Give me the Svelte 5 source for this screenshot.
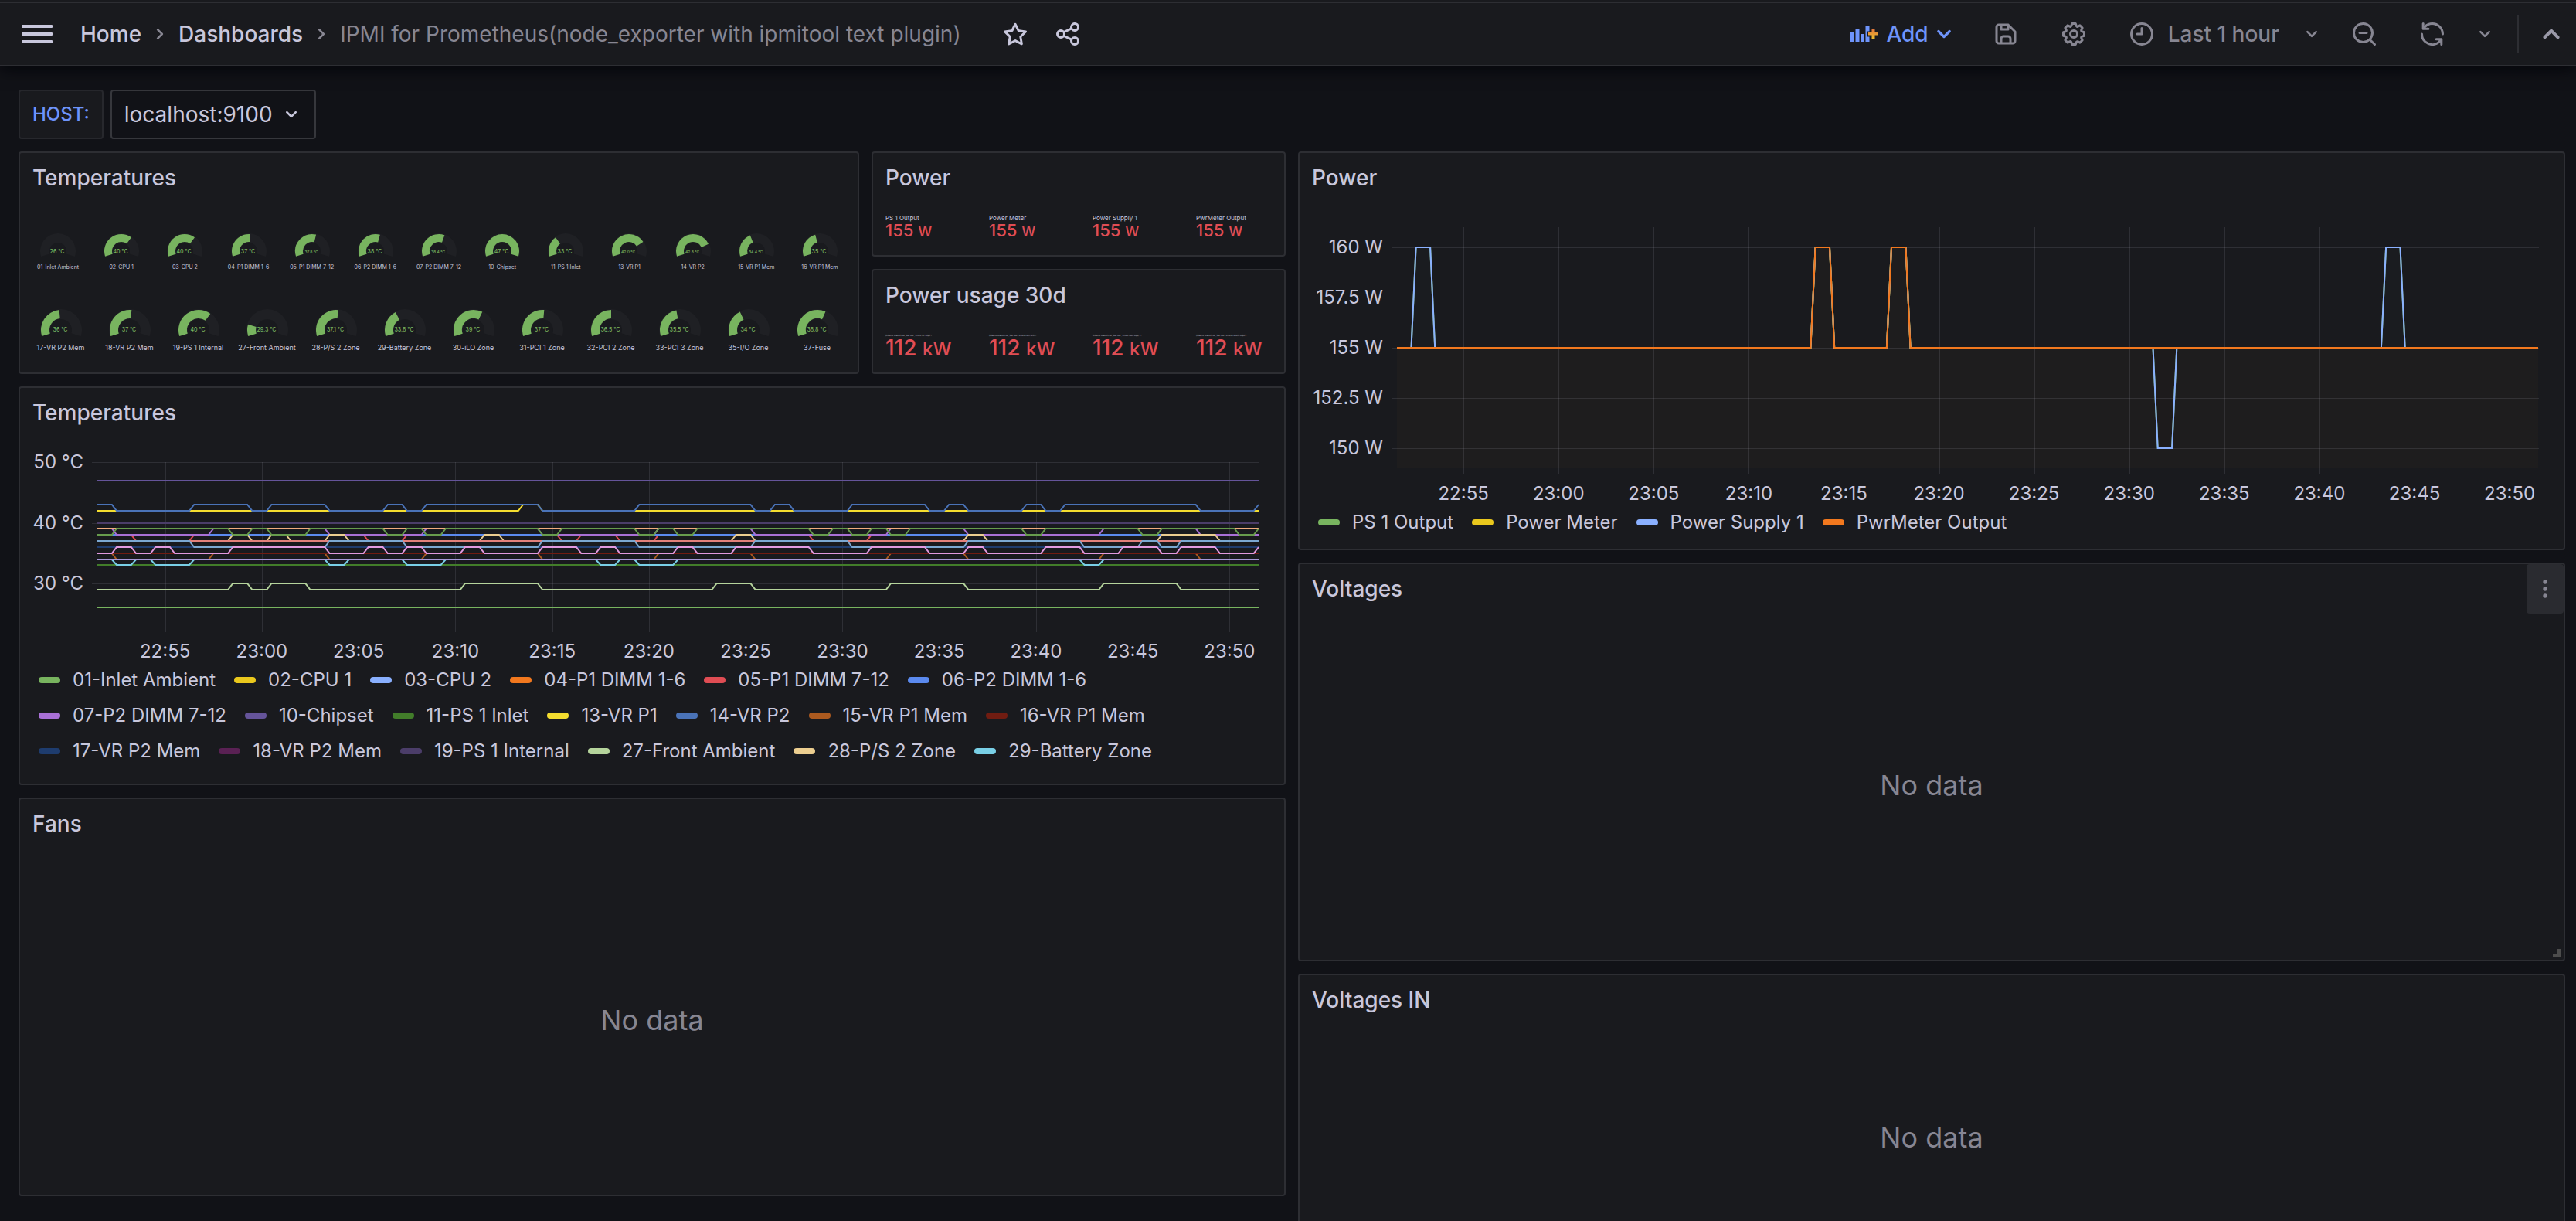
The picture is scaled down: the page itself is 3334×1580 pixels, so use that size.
<script lang="ts">
  interface Series {
    name: string;
    color: string;
    points: [number, number][];
  }
  interface Chart {
    width: number;
    height: number;
    left: number;
    top: number;
    bottom: number;
    min: number;
    max: number;
    ticks: number[];
    unit: string;
    fill: boolean;
  }

  const SPAN = 60; // minutes shown
  const times = ["22:55", "23:00", "23:05", "23:10", "23:15", "23:20", "23:25", "23:30", "23:35", "23:40", "23:45", "23:50"];

  const icons = {
    down: "M17,9.17a1,1,0,0,0-1.41,0L12,12.71,8.46,9.17a1,1,0,0,0-1.41,0,1,1,0,0,0,0,1.42l4.24,4.24a1,1,0,0,0,1.42,0L17,10.59A1,1,0,0,0,17,9.17Z",
    up: "M17,13.41,12.71,9.17a1,1,0,0,0-1.42,0L7.05,13.41a1,1,0,0,0,0,1.42,1,1,0,0,0,1.41,0L12,11.29l3.54,3.54a1,1,0,0,0,.7.29,1,1,0,0,0,.71-.29A1,1,0,0,0,17,13.41Z",
    right: "M14.83,11.29,10.59,7.05a1,1,0,0,0-1.42,0,1,1,0,0,0,0,1.41L12.71,12,9.17,15.54a1,1,0,0,0,0,1.41,1,1,0,0,0,.71.29,1,1,0,0,0,.71-.29l4.24-4.24A1,1,0,0,0,14.83,11.29Z",
    star: "M22,9.67A1,1,0,0,0,21.14,9l-5.69-.83L12.9,3a1,1,0,0,0-1.8,0L8.55,8.16,2.86,9a1,1,0,0,0-.81.68,1,1,0,0,0,.25,1l4.13,4-1,5.68A1,1,0,0,0,6.9,21.44L12,18.77l5.1,2.67a.93.93,0,0,0,.46.12,1,1,0,0,0,.59-.19,1,1,0,0,0,.4-1l-1-5.68,4.13-4A1,1,0,0,0,22,9.67Zm-6.15,4a1,1,0,0,0-.29.88l.72,4.2-3.76-2a1.06,1.06,0,0,0-.94,0l-3.76,2,.72-4.2a1,1,0,0,0-.29-.88l-3-3,4.21-.61a1,1,0,0,0,.76-.55L12,5.7l1.88,3.82a1,1,0,0,0,.76.55l4.21.61Z",
    share: "M18,14a4,4,0,0,0-3.08,1.48l-5.1-2.35a3.64,3.64,0,0,0,0-2.26l5.1-2.35A4,4,0,1,0,14,6a4.17,4.17,0,0,0,.07.71L8.79,9.14a4,4,0,1,0,0,5.72l5.28,2.43A4.17,4.17,0,0,0,14,18a4,4,0,1,0,4-4ZM18,4a2,2,0,1,1-2,2A2,2,0,0,1,18,4ZM6,14a2,2,0,1,1,2-2A2,2,0,0,1,6,14Zm12,6a2,2,0,1,1,2-2A2,2,0,0,1,18,20Z",
    save: "M20.71,9.29l-6-6a1,1,0,0,0-.32-.21A1.09,1.09,0,0,0,14,3H6A3,3,0,0,0,3,6V18a3,3,0,0,0,3,3H18a3,3,0,0,0,3-3V10A1,1,0,0,0,20.71,9.29ZM9,5h4V7H9Zm6,14H9V16a1,1,0,0,1,1-1h4a1,1,0,0,1,1,1Zm4-1a1,1,0,0,1-1,1H17V16a3,3,0,0,0-3-3H10a3,3,0,0,0-3,3v3H6a1,1,0,0,1-1-1V6A1,1,0,0,1,6,5H7V8A1,1,0,0,0,8,9h6a1,1,0,0,0,1-1V6.41l4,4Z",
    cog: "M21.32,9.55l-1.89-.63.89-1.78A1,1,0,0,0,20.13,6L18,3.87a1,1,0,0,0-1.15-.19l-1.78.89-.63-1.89A1,1,0,0,0,13.5,2h-3a1,1,0,0,0-.95.68L8.92,4.57,7.14,3.68A1,1,0,0,0,6,3.87L3.87,6a1,1,0,0,0-.19,1.15l.89,1.78-1.89.63A1,1,0,0,0,2,10.5v3a1,1,0,0,0,.68.95l1.89.63-.89,1.78A1,1,0,0,0,3.87,18L6,20.13a1,1,0,0,0,1.15.19l1.78-.89.63,1.89a1,1,0,0,0,.95.68h3a1,1,0,0,0,.95-.68l.63-1.89,1.78.89A1,1,0,0,0,18,20.13L20.13,18a1,1,0,0,0,.19-1.15l-.89-1.78,1.89-.63A1,1,0,0,0,22,13.5v-3A1,1,0,0,0,21.32,9.55ZM20,12.78l-1.2.4A2,2,0,0,0,17.64,16l.57,1.14-1.1,1.1L16,17.64a2,2,0,0,0-2.79,1.16l-.4,1.2H11.22l-.4-1.2A2,2,0,0,0,8,17.64l-1.14.57-1.1-1.1L6.36,16A2,2,0,0,0,5.2,13.18L4,12.78V11.22l1.2-.4A2,2,0,0,0,6.36,8L5.79,6.89l1.1-1.1L8,6.36A2,2,0,0,0,10.82,5.2l.4-1.2h1.56l.4,1.2A2,2,0,0,0,16,6.36l1.14-.57,1.1,1.1L17.64,8a2,2,0,0,0,1.16,2.79l1.2.4ZM12,8a4,4,0,1,0,4,4A4,4,0,0,0,12,8Zm0,6a2,2,0,1,1,2-2A2,2,0,0,1,12,14Z",
    clock: "M12,2A10,10,0,1,0,22,12,10,10,0,0,0,12,2Zm0,18a8,8,0,1,1,8-8A8,8,0,0,1,12,20ZM12,6a1,1,0,0,0-1,1v4H8a1,1,0,0,0,0,2h4a1,1,0,0,0,1-1V7A1,1,0,0,0,12,6Z",
    zoomOut: "M21.71,20.29,18,16.61A9,9,0,1,0,16.61,18l3.68,3.68a1,1,0,0,0,1.42,0A1,1,0,0,0,21.71,20.29ZM11,18a7,7,0,1,1,7-7A7,7,0,0,1,11,18Zm3-8H8a1,1,0,0,0,0,2h6a1,1,0,0,0,0-2Z",
    sync: "M19.91,15.51H15.38a1,1,0,0,0,0,2h2.4A8,8,0,0,1,4,12a1,1,0,0,0-2,0,10,10,0,0,0,16.88,7.23V21a1,1,0,0,0,2,0V16.5A1,1,0,0,0,19.91,15.51ZM12,2A10,10,0,0,0,5.12,4.77V3a1,1,0,0,0-2,0V7.5a1,1,0,0,0,1,1h4.5a1,1,0,0,0,0-2H6.22A8,8,0,0,1,20,12a1,1,0,0,0,2,0A10,10,0,0,0,12,2Z",
  };

  // changes: [minute, new value]; each change ramps over the 15s before its minute
  function steps(start: number, changes: [number, number][]): [number, number][] {
    const out: [number, number][] = [[0, start]];
    let current = start;
    for (const [minute, value] of changes) {
      out.push([minute - 0.25, current], [minute, value]);
      current = value;
    }
    out.push([SPAN, current]);
    return out;
  }

  function flip(start: number, other: number, minutes: number[] = []): [number, number][] {
    return steps(start, minutes.map((m, i) => [m, i % 2 === 0 ? other : start]));
  }

  const temperatures: Series[] = [
    { name: "01-Inlet Ambient", color: "#78b45f", points: flip(26, 26) },
    { name: "02-CPU 1", color: "#eac81d", points: flip(40, 40) },
    { name: "03-CPU 2", color: "#8ab0ff", points: flip(40, 40) },
    { name: "04-P1 DIMM 1-6", color: "#f2781e", points: flip(37, 37) },
    { name: "05-P1 DIMM 7-12", color: "#e04d54", points: flip(38, 37, [2, 5, 14, 16, 24, 25, 27, 29, 37, 40]) },
    { name: "06-P2 DIMM 1-6", color: "#5b8aef", points: flip(38, 38) },
    { name: "07-P2 DIMM 7-12", color: "#a970d6", points: flip(39, 38, [1, 6, 12, 17, 23, 29, 34, 41, 45, 52, 57]) },
    { name: "10-Chipset", color: "#65549a", points: flip(47, 47) },
    { name: "11-PS 1 Inlet", color: "#427d2a", points: flip(33, 33) },
    { name: "13-VR P1", color: "#f4dd2f", points: flip(42, 43, [22, 23]) },
    { name: "14-VR P2", color: "#4a73b8", points: flip(43, 42, [1, 5, 8, 9, 12, 15, 16, 17, 23, 28, 34, 35, 36, 39, 43, 44, 45, 48, 49, 50, 57, 60]) },
    { name: "15-VR P1 Mem", color: "#ac5a1f", points: flip(35, 34, [1, 6, 12, 17, 23, 29, 34, 41, 45, 52, 57]) },
    { name: "16-VR P1 Mem", color: "#701c11", points: flip(35, 35) },
    { name: "17-VR P2 Mem", color: "#1e3c6e", points: flip(36, 36) },
    { name: "18-VR P2 Mem", color: "#5a2154", points: flip(37, 37) },
    { name: "19-PS 1 Internal", color: "#4b3d69", points: flip(40, 40) },
    { name: "27-Front Ambient", color: "#b5d49c", points: flip(29, 30, [7, 8, 9, 11, 19, 23, 32, 34, 41, 45, 52, 56]) },
    { name: "28-P/S 2 Zone", color: "#ecce90", points: flip(37, 38, [7, 8, 9, 10, 12, 13, 20, 21, 33, 34, 45, 46, 55, 58]) },
    { name: "29-Battery Zone", color: "#79cfe6", points: flip(34, 33, [1, 2, 3, 5, 12, 13, 16, 18, 26, 27, 28, 30, 51, 52]) },
    { name: "30-iLO Zone", color: "#f0ac7e", points: flip(39, 39) },
    { name: "31-PCI 1 Zone", color: "#e2807a", points: flip(37, 37) },
    { name: "32-PCI 2 Zone", color: "#7ba8d2", points: flip(37, 36, [5, 12, 16, 23, 28, 34, 39, 45, 51, 54, 55, 56]) },
    { name: "33-PCI 3 Zone", color: "#e29ae0", points: flip(35, 36, [1, 2, 3, 4, 7, 12, 14, 15, 16, 17, 19, 20, 23, 25, 26, 27, 30, 31, 33, 37, 40, 43, 45, 46, 49, 51, 53, 55, 56, 58, 60]) },
    { name: "35-I/O Zone", color: "#a798d9", points: flip(34, 34) },
    { name: "37-Fuse", color: "#679c4d", points: flip(38, 39, [1, 7, 8, 9, 11, 15, 16, 17, 18, 23, 24, 28, 29, 30, 31, 37, 38, 39, 40, 41, 42, 48, 49, 54, 55, 59, 60]) },
  ];

  const supply = steps(155, [[1, 160], [2, 155], [22, 160], [23, 155], [26, 160], [27, 155], [40, 150], [41, 155], [52, 160], [53, 155]]);
  const meter = flip(155, 160, [22, 23, 26, 27]);
  const power: Series[] = [
    { name: "PS 1 Output", color: "#78b45f", points: supply },
    { name: "Power Meter", color: "#eac81d", points: meter },
    { name: "Power Supply 1", color: "#8ab0ff", points: supply },
    { name: "PwrMeter Output", color: "#f2781e", points: meter },
  ];

  let tempWidth = $state(1604);
  let powerWidth = $state(1604);
  const tempChart = $derived<Chart>({ width: tempWidth, height: 290, left: 84, top: 32, bottom: 244, min: 23, max: 50, ticks: [50, 40, 30], unit: "°C", fill: false });
  const powerChart = $derived<Chart>({ width: powerWidth, height: 390, left: 110, top: 32, bottom: 344, min: 149, max: 161, ticks: [160, 157.5, 155, 152.5, 150], unit: "W", fill: true });

  function xAt(c: Chart, minute: number): number {
    return c.left + (minute / SPAN) * (c.width - 17 - c.left);
  }
  function yAt(c: Chart, value: number): number {
    return Math.round(c.bottom - ((value - c.min) / (c.max - c.min)) * (c.bottom - c.top));
  }
  function line(c: Chart, points: [number, number][]): string {
    return "M" + points.map(([m, v]) => `${xAt(c, m).toFixed(1)},${yAt(c, v)}`).join("L");
  }

  const gaugeRows: [string, number][][] = [
    [
      ["01-Inlet Ambient", 26], ["02-CPU 1", 40], ["03-CPU 2", 40], ["04-P1 DIMM 1-6", 37], ["05-P1 DIMM 7-12", 37.8],
      ["06-P2 DIMM 1-6", 38], ["07-P2 DIMM 7-12", 38.4], ["10-Chipset", 47], ["11-PS 1 Inlet", 33], ["13-VR P1", 42],
      ["14-VR P2", 42.8], ["15-VR P1 Mem", 34.4], ["16-VR P1 Mem", 35],
    ],
    [
      ["17-VR P2 Mem", 36], ["18-VR P2 Mem", 37], ["19-PS 1 Internal", 40], ["27-Front Ambient", 29.3], ["28-P/S 2 Zone", 37.1],
      ["29-Battery Zone", 33.8], ["30-iLO Zone", 39], ["31-PCI 1 Zone", 37], ["32-PCI 2 Zone", 36.5], ["33-PCI 3 Zone", 35.5],
      ["35-I/O Zone", 34], ["37-Fuse", 38.8],
    ],
  ];

  // ring segment centred on 0,0; the dial runs 216 degrees from lower left to lower right
  function arc(outer: number, inner: number, fraction: number): string {
    const from = (162 * Math.PI) / 180;
    const to = from + (fraction * 216 * Math.PI) / 180;
    const large = fraction * 216 > 180 ? 1 : 0;
    const p = (r: number, a: number) => `${(r * Math.cos(a)).toFixed(2)},${(r * Math.sin(a)).toFixed(2)}`;
    return `M${p(outer, from)}A${outer},${outer} 0 ${large} 1 ${p(outer, to)}L${p(inner, to)}A${inner},${inner} 0 ${large} 0 ${p(inner, from)}Z`;
  }

  function gaugeText(name: string, value: number): string {
    return (name === "13-VR P1" ? value.toFixed(1) : String(value)) + " °C";
  }
</script>

{#snippet icon(path: string, size: number)}
  <svg width={size} height={size} viewBox="0 0 24 24" fill="currentColor" aria-hidden="true"><path d={path} /></svg>
{/snippet}

{#snippet angle(path: string, size: number)}
  <svg width={size} height={size} viewBox="6 6 12 12" fill="currentColor" aria-hidden="true"><path d={path} /></svg>
{/snippet}

{#snippet plot(c: Chart, series: Series[])}
  <svg class="plot" width={c.width} height={c.height} role="img" aria-label="Time series">
    {#if c.fill}
      {#each series as s}
        <path d="{line(c, s.points)}V{c.bottom}H{c.left}Z" fill={s.color} opacity="0.012" />
      {/each}
    {/if}
    <g class="grid-lines">
      {#each c.ticks as t}
        <line x1={c.left - 7} x2={c.width - 16} y1={yAt(c, t) + 0.5} y2={yAt(c, t) + 0.5} />
      {/each}
      {#each times as _, i}
        {@const x = Math.round(xAt(c, 3.5 + i * 5)) + 0.5}
        <line x1={x} x2={x} y1={c.top} y2={c.bottom + 8} />
      {/each}
    </g>
    {#each series as s}
      <path d={line(c, s.points)} fill="none" stroke={s.color} stroke-width="2" />
    {/each}
    {#each c.ticks as t}
      <text x={c.left - 18} y={yAt(c, t) + 8} text-anchor="end">{t} {c.unit}</text>
    {/each}
    {#each times as time, i}
      <text x={xAt(c, 3.5 + i * 5)} y={c.bottom + 41} text-anchor="middle">{time}</text>
    {/each}
  </svg>
{/snippet}

{#snippet legend(series: Series[])}
  <ul class="legend">
    {#each series as s}
      <li><button type="button"><span class="swatch" style="background:{s.color}"></span>{s.name}</button></li>
    {/each}
  </ul>
{/snippet}

<div class="page">
  <header>
    <button type="button" class="menu" aria-label="Toggle menu"><span></span><span></span><span></span></button>
    <nav aria-label="Breadcrumbs">
      <a href="#home">Home</a>
      {@render angle(icons.right, 16)}
      <a href="#dashboards">Dashboards</a>
      {@render angle(icons.right, 16)}
      <span class="current">IPMI for Prometheus(node_exporter with ipmitool text plugin)</span>
    </nav>
    <div class="title-actions">
      <button type="button" aria-label="Mark as favorite">{@render icon(icons.star, 36)}</button>
      <button type="button" aria-label="Share dashboard">{@render icon(icons.share, 36)}</button>
    </div>
    <div class="toolbar">
      <button type="button" class="add">
        <svg width="36" height="20" viewBox="0 0 36 20" aria-hidden="true">
          <defs>
            <linearGradient id="plus" x1="0" y1="0" x2="0" y2="1">
              <stop offset="0" stop-color="#e0703c" />
              <stop offset="1" stop-color="#ecc42c" />
            </linearGradient>
          </defs>
          <path fill="currentColor" d="M0 7h5v13H0zM6.5 3.500h5V20h-5zM13 10h5v10h-5zM19.500 0h5v6.500h-2.500v7h2.500V20h-5z" />
          <path fill="url(#plus)" d="M27.500 3h4v4.500H36v4h-4.500V17h-4v-5.500H23v-4h4.500z" />
        </svg>
        Add
        {@render angle(icons.down, 20)}
      </button>
      <button type="button" aria-label="Save dashboard">{@render icon(icons.save, 36)}</button>
      <button type="button" aria-label="Dashboard settings">{@render icon(icons.cog, 36)}</button>
      <button type="button" class="range">{@render icon(icons.clock, 36)}<span>Last 1 hour</span>{@render angle(icons.down, 16)}</button>
      <button type="button" class="near" aria-label="Zoom out">{@render icon(icons.zoomOut, 36)}</button>
      <button type="button" aria-label="Refresh">{@render icon(icons.sync, 36)}</button>
      <button type="button" class="near" aria-label="Refresh interval">{@render angle(icons.down, 16)}</button>
      <span class="divider"></span>
      <button type="button" class="collapse" aria-label="Hide top bar">{@render angle(icons.up, 24)}</button>
    </div>
  </header>

  <div class="variables">
    <label for="host">HOST:</label>
    <div class="select">
      <select id="host">
        <option>localhost:9100</option>
      </select>
      {@render angle(icons.down, 16)}
    </div>
  </div>

  <main>
    <section class="panel gauges">
      <h2>Temperatures</h2>
      <div class="gauge-rows">
        {#each gaugeRows as row, r}
          {@const outer = r === 0 ? 23 : 27}
          {@const inner = r === 0 ? 11 : 14}
          {@const height = r === 0 ? 32 : 36}
          <div class="gauge-row" class:large={r === 1}>
            {#each row as [name, value]}
              <figure>
                <svg width="56" {height} viewBox="-28 {-outer} 56 {height}" aria-hidden="true">
                  <path d={arc(outer, inner, 1)} fill="#1f2024" />
                  {#if value > 26}
                    <path d={arc(outer - 1, inner + 1, (value - 26) / 21)} fill="#78b45f" />
                  {/if}
                  <text x="-1" y={r === 0 ? 3 : 2} class:tiny={r === 0 && gaugeText(name, value).includes(".")}>{gaugeText(name, value)}</text>
                </svg>
                <figcaption>{name}</figcaption>
              </figure>
            {/each}
          </div>
        {/each}
      </div>
    </section>

    <section class="panel stats">
      <h2>Power</h2>
      <div class="stat-row">
        {#each power as s}
          <div class="stat">
            <span class="stat-name">{s.name}</span>
            <span class="stat-value">155 <small>W</small></span>
          </div>
        {/each}
      </div>
    </section>

    <section class="panel power-chart">
      <h2>Power</h2>
      <div class="chart" bind:clientWidth={powerWidth}>{@render plot(powerChart, power)}</div>
      {@render legend(power)}
    </section>

    <section class="panel stats usage">
      <h2>Power usage 30d</h2>
      <div class="stat-row">
        {#each power as s}
          <div class="stat">
            <span class="stat-name">{`{instance="localhost:9100", job="node", sensor="${s.name}"}`}</span>
            <span class="stat-value">112 <small>kW</small></span>
          </div>
        {/each}
      </div>
    </section>

    <section class="panel temp-chart">
      <h2>Temperatures</h2>
      <div class="chart" bind:clientWidth={tempWidth}>{@render plot(tempChart, temperatures)}</div>
      {@render legend(temperatures.slice(0, 19))}
    </section>

    <section class="panel fans">
      <h2>Fans</h2>
      <p class="empty">No data</p>
    </section>

    <section class="panel voltages">
      <div class="panel-head">
        <h2>Voltages</h2>
        <button type="button" class="panel-menu" aria-label="Panel menu">
          <svg width="8" height="24" viewBox="0 0 8 24" fill="currentColor" aria-hidden="true">
            <circle cx="4" cy="3" r="2.700" /><circle cx="4" cy="12" r="2.700" /><circle cx="4" cy="21" r="2.700" />
          </svg>
        </button>
      </div>
      <p class="empty">No data</p>
      <span class="resize"></span>
    </section>

    <section class="panel voltages-in">
      <h2>Voltages IN</h2>
      <p class="empty">No data</p>
    </section>
  </main>
</div>

<style>
  :global(body) { background: #111217; }
  .page {
    height: 100vh; overflow: hidden; background: #111217; color: #c8c7dc;
    font-family: Inter, "Liberation Sans", sans-serif; font-size: 28px; line-height: 44px;
  }
  svg { display: block; flex: none; }
  button {
    display: flex; align-items: center; padding: 0; border: none; background: none;
    color: inherit; font: inherit; cursor: pointer;
  }
  h2 { margin: 0; padding: 0 16px; font-size: 28px; font-weight: 500; line-height: 64px; }

  header {
    display: flex; align-items: center; position: relative; height: 80px; margin-top: 2px; padding: 0 20px 0 28px;
    background: #191a1e; border-top: 2px solid #2d2e33; border-bottom: 2px solid #2d2e33;
    box-shadow: 0 -2px 0 #191a1e, 0 2px 20px #020308;
  }
  .menu { flex-direction: column; gap: 6px; width: 40px; margin-right: 36px; }
  .menu span { width: 40px; height: 4px; border-radius: 1px; background: #c8c7dc; }
  nav { display: flex; align-items: center; gap: 16px; font-weight: 500; white-space: nowrap; }
  nav a { color: inherit; text-decoration: none; }
  nav svg, .current { color: #878692; }
  .current { font-weight: 400; }
  .title-actions { display: flex; gap: 32px; margin-left: 52px; }
  .toolbar { display: flex; align-items: center; gap: 52px; margin-left: auto; color: #878692; font-weight: 500; white-space: nowrap; }
  .add { gap: 10px; color: #6e94fb; }
  .range span { margin: 0 34px 0 16px; }
  .near { margin-left: -10px; }
  .divider { width: 2px; height: 48px; margin: 0 -22px 0 -18px; background: #2d2e33; }
  .collapse { color: #9a99a8; }

  .variables { display: flex; gap: 9px; padding: 30px 24px 16px; }
  .variables label {
    box-sizing: border-box; height: 64px; padding: 0 16px; border: 2px solid #27282d; border-radius: 4px;
    background: #191a1e; color: #6e94fb; font-size: 24px; font-weight: 500; line-height: 60px;
  }
  .select {
    display: flex; align-items: center; box-sizing: border-box; height: 64px; padding: 0 22px 0 16px;
    border: 2px solid #36373c; border-radius: 4px; background: #111217;
  }
  select {
    appearance: none; padding: 0; margin-right: 16px; border: none; background: none;
    color: inherit; font: inherit; cursor: pointer;
  }

  main {
    display: grid; grid-template-columns: repeat(24, minmax(0, 1fr)); grid-auto-rows: 60px;
    gap: 16px; padding: 0 14px 0 24px;
  }
  .panel {
    display: flex; flex-direction: column; position: relative; overflow: hidden;
    background: #191a1e; border: 2px solid #2d2e33; border-radius: 4px;
  }
  .gauges { grid-area: 1 / 1 / span 4 / span 8; }
  .stats { grid-area: 1 / 9 / span 2 / span 4; }
  .usage { grid-area: 3 / 9 / span 2 / span 4; }
  .power-chart { grid-area: 1 / 13 / span 7 / span 12; }
  .temp-chart { grid-area: 5 / 1 / span 7 / span 12; }
  .voltages { grid-area: 8 / 13 / span 7 / span 12; }
  .fans { grid-area: 12 / 1 / span 7 / span 12; }
  .voltages-in { grid-area: 15 / 13 / span 5 / span 12; }

  .gauge-rows { padding: 40px 8px 0; }
  .gauge-row { display: grid; grid-template-columns: repeat(13, minmax(0, 1fr)); margin-bottom: 50px; font-size: 7px; line-height: 8px; }
  .gauge-row.large { grid-template-columns: repeat(12, minmax(0, 1fr)); margin-bottom: 0; font-size: 9px; line-height: 12px; }
  figure { display: flex; flex-direction: column; align-items: center; gap: 8px; margin: 0; white-space: nowrap; }
  figure text { fill: #78b45f; font-size: 7px; font-weight: 500; text-anchor: middle; }
  figure text.tiny { font-size: 5px; }

  .stat-row { display: grid; grid-template-columns: repeat(4, minmax(0, 1fr)); gap: 20px; padding: 16px 0 0 16px; }
  .stat { display: flex; flex-direction: column; white-space: nowrap; }
  .stat-name { font-size: 8px; line-height: 8px; }
  .stat-value { color: #e04d54; font-size: 22px; font-weight: 500; line-height: 24px; }
  .stat-value small { font-size: 18px; }
  .usage .stat-name { font-size: 2px; }
  .usage .stat-value { font-size: 28px; line-height: 24px; }
  .usage .stat-value small { font-size: 24px; }

  .chart { margin: 0 16px; overflow: hidden; }
  .plot text { fill: #c8c7dc; font-size: 24px; }
  .grid-lines line { stroke: #ccccdc; stroke-opacity: 0.12; }
  .legend { display: flex; flex-wrap: wrap; margin: 0; padding: 1px 8px 0 24px; list-style: none; font-size: 24px; line-height: 46px; }
  .legend li { margin-right: 24px; }
  .swatch { width: 28px; height: 8px; margin-right: 16px; border-radius: 4px; }

  .panel-head { display: flex; justify-content: space-between; }
  .panel-menu { justify-content: center; width: 48px; height: 64px; border-radius: 4px; background: #2a2b30; color: #878692; }
  .empty { display: flex; flex: 1; align-items: center; justify-content: center; margin: 0; padding-bottom: 4px; color: #878692; font-size: 36px; }
  .resize {
    position: absolute; right: 4px; bottom: 4px; width: 6px; height: 6px;
    border-right: 4px solid #4c4c4c; border-bottom: 4px solid #4c4c4c;
  }
</style>
